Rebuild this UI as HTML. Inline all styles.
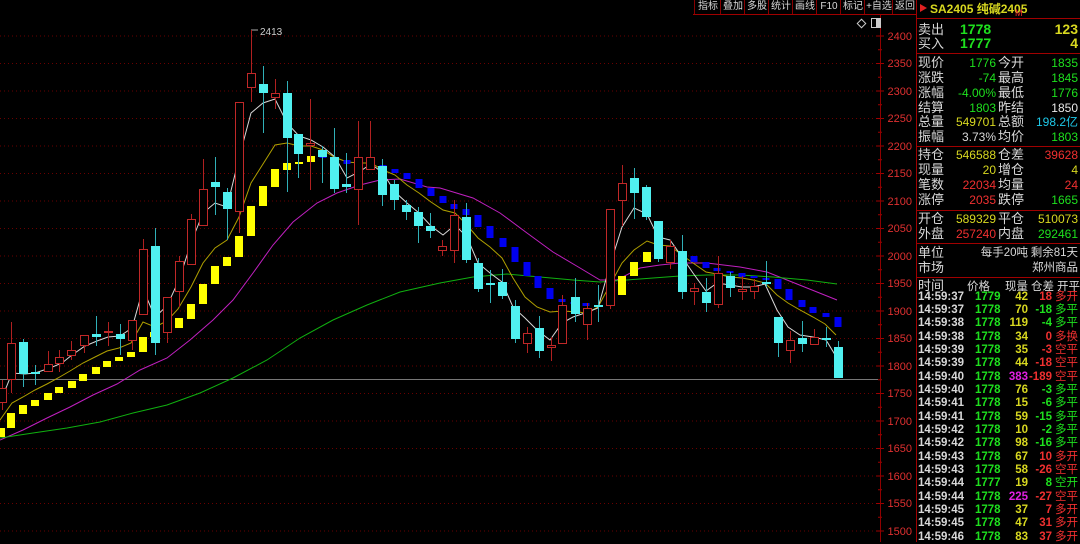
<!DOCTYPE html>
<html><head><meta charset="utf-8">
<style>
body{margin:0;width:1080px;height:542px;background:#000;overflow:hidden;font-family:"Liberation Sans","Noto Sans CJK SC",sans-serif;position:relative}
.t{position:absolute;font-size:12px;line-height:14px;white-space:nowrap}
.l{color:#d8d8d8;font-size:13px}.g{color:#1ee01e}.y{color:#d8d820}.r{color:#f03030}.w{color:#e8e8e8}.c{color:#1ec8e8}.m{color:#e020e0}
.s{font-size:11.5px}
.R{text-align:right}
.hl{position:absolute;left:916px;width:164px;height:1px;background:#a00000}
.btn{position:absolute;top:0;height:14px;font-size:10px;line-height:14px;color:#d8d8d8;text-align:center;border-left:1px solid #800;white-space:nowrap;overflow:hidden}
.ax{position:absolute;font-size:11px;color:#e03030;left:884px;width:28px;text-align:right;line-height:12px}
.tr div{position:absolute;font-size:11.5px;line-height:13px;font-weight:bold;white-space:nowrap}
.tr .l{font-size:11.5px}
</style></head><body>
<svg id="ch" width="1080" height="542" style="position:absolute;left:0;top:0"></svg>

<div style="position:absolute;left:693px;top:14px;width:223px;height:1px;background:#a00000"></div>
<div class="btn" style="left:694px;width:26px">指标</div>
<div class="btn" style="left:720px;width:24px">叠加</div>
<div class="btn" style="left:744px;width:24px">多股</div>
<div class="btn" style="left:768px;width:24px">统计</div>
<div class="btn" style="left:792px;width:24px">画线</div>
<div class="btn" style="left:816px;width:24px">F10</div>
<div class="btn" style="left:840px;width:24px">标记</div>
<div class="btn" style="left:864px;width:28px">+自选</div>
<div class="btn" style="left:892px;width:24px">返回</div>
<div style="position:absolute;left:858px;top:20px;width:5px;height:5px;border:1px solid #ccc;transform:rotate(45deg)"></div>
<div style="position:absolute;left:871px;top:18px;width:8px;height:8px;border:1px solid #ccc;background:linear-gradient(90deg,#000 50%,#ccc 50%)"></div>

<div class="ax" style="top:31px">2400</div><div class="ax" style="top:58px">2350</div>
<div class="ax" style="top:86px">2300</div><div class="ax" style="top:113px">2250</div>
<div class="ax" style="top:141px">2200</div><div class="ax" style="top:168px">2150</div>
<div class="ax" style="top:196px">2100</div><div class="ax" style="top:223px">2050</div>
<div class="ax" style="top:251px">2000</div><div class="ax" style="top:278px">1950</div>
<div class="ax" style="top:306px">1900</div><div class="ax" style="top:333px">1850</div>
<div class="ax" style="top:361px">1800</div><div class="ax" style="top:388px">1750</div>
<div class="ax" style="top:416px">1700</div><div class="ax" style="top:443px">1650</div>
<div class="ax" style="top:471px">1600</div><div class="ax" style="top:498px">1550</div>
<div class="ax" style="top:526px">1500</div>
<div class="t" style="left:260px;top:26px;font-size:10px;color:#ccc">2413</div>

<div style="position:absolute;left:916px;top:0;width:1px;height:542px;background:#a00000"></div>
<div style="position:absolute;left:920px;top:4px;width:0;height:0;border-left:7px solid #e02020;border-top:4px solid transparent;border-bottom:4px solid transparent"></div>
<div class="t y" style="left:930px;top:2px;font-weight:bold">SA2405 纯碱2405</div>
<div class="t r" style="left:1015px;top:6px;font-size:9px">M</div>
<div class="hl" style="top:18px"></div>
<div class="t l" style="left:918px;top:23px">卖出</div>
<div class="t g" style="left:960px;top:22px;width:44px;font-size:14px;font-weight:bold" >1778</div>
<div class="t y R" style="left:1020px;top:22px;width:58px;font-size:14px;font-weight:bold">123</div>
<div class="t l" style="left:918px;top:37px">买入</div>
<div class="t g" style="left:960px;top:36px;font-size:14px;font-weight:bold">1777</div>
<div class="t y R" style="left:1020px;top:36px;width:58px;font-size:14px;font-weight:bold">4</div>
<div class="hl" style="top:53px"></div>

<div class="t l" style="left:918px;top:56px">现价</div><div class="t g R" style="left:940px;top:56px;width:56px">1776</div><div class="t l" style="left:998px;top:56px">今开</div><div class="t g R" style="left:1020px;top:56px;width:58px">1835</div>
<div class="t l" style="left:918px;top:71px">涨跌</div><div class="t g R" style="left:940px;top:71px;width:56px">-74</div><div class="t l" style="left:998px;top:71px">最高</div><div class="t g R" style="left:1020px;top:71px;width:58px">1845</div>
<div class="t l" style="left:918px;top:86px">涨幅</div><div class="t g R" style="left:940px;top:86px;width:56px">-4.00%</div><div class="t l" style="left:998px;top:86px">最低</div><div class="t g R" style="left:1020px;top:86px;width:58px">1776</div>
<div class="t l" style="left:918px;top:101px">结算</div><div class="t g R" style="left:940px;top:101px;width:56px">1803</div><div class="t l" style="left:998px;top:101px">昨结</div><div class="t w R" style="left:1020px;top:101px;width:58px">1850</div>
<div class="t l" style="left:918px;top:115px">总量</div><div class="t y R" style="left:940px;top:115px;width:56px">549701</div><div class="t l" style="left:998px;top:115px">总额</div><div class="t c R" style="left:1020px;top:115px;width:58px">198.2亿</div>
<div class="t l" style="left:918px;top:130px">振幅</div><div class="t R" style="left:940px;top:130px;width:56px;color:#d8d8d8">3.73%</div><div class="t l" style="left:998px;top:130px">均价</div><div class="t g R" style="left:1020px;top:130px;width:58px">1803</div>
<div class="hl" style="top:146px"></div>
<div class="t l" style="left:918px;top:148px">持仓</div><div class="t y R" style="left:940px;top:148px;width:56px">546588</div><div class="t l" style="left:998px;top:148px">仓差</div><div class="t r R" style="left:1020px;top:148px;width:58px">39628</div>
<div class="t l" style="left:918px;top:163px">现量</div><div class="t y R" style="left:940px;top:163px;width:56px">20</div><div class="t l" style="left:998px;top:163px">增仓</div><div class="t y R" style="left:1020px;top:163px;width:58px">4</div>
<div class="t l" style="left:918px;top:178px">笔数</div><div class="t r R" style="left:940px;top:178px;width:56px">22034</div><div class="t l" style="left:998px;top:178px">均量</div><div class="t r R" style="left:1020px;top:178px;width:58px">24</div>
<div class="t l" style="left:918px;top:193px">涨停</div><div class="t r R" style="left:940px;top:193px;width:56px">2035</div><div class="t l" style="left:998px;top:193px">跌停</div><div class="t g R" style="left:1020px;top:193px;width:58px">1665</div>
<div class="hl" style="top:210px"></div>
<div class="t l" style="left:918px;top:212px">开仓</div><div class="t y R" style="left:940px;top:212px;width:56px">589329</div><div class="t l" style="left:998px;top:212px">平仓</div><div class="t y R" style="left:1020px;top:212px;width:58px">510073</div>
<div class="t l" style="left:918px;top:227px">外盘</div><div class="t r R" style="left:940px;top:227px;width:56px">257240</div><div class="t l" style="left:998px;top:227px">内盘</div><div class="t g R" style="left:1020px;top:227px;width:58px">292461</div>
<div class="hl" style="top:243px"></div>
<div class="t l" style="left:918px;top:246px">单位</div><div class="t l s R" style="left:960px;top:246px;width:68px">每手20吨</div><div class="t l s R" style="left:1020px;top:246px;width:58px">剩余81天</div>
<div class="t l" style="left:918px;top:261px">市场</div><div class="t l s R" style="left:1010px;top:261px;width:68px">郑州商品</div>
<div class="hl" style="top:277px"></div>
<div class="t l" style="left:918px;top:279px">时间</div><div class="t l s" style="left:967px;top:280px">价格</div><div class="t l s" style="left:1005px;top:280px">现量</div><div class="t l s" style="left:1031px;top:280px">仓差</div><div class="t l s" style="left:1057px;top:280px">开平</div>

<div class="tr">
<div class="l" style="left:918px;top:291px">14:59:37</div><div class="g" style="left:975px;top:291px">1779</div><div class="y R" style="left:996px;top:291px;width:32px">42</div><div class="r R" style="left:1030px;top:291px;width:22px">18</div><div class="r" style="left:1055px;top:291px;font-weight:normal">多开</div>
<div class="l" style="left:918px;top:304px">14:59:37</div><div class="g" style="left:975px;top:304px">1778</div><div class="y R" style="left:996px;top:304px;width:32px">70</div><div class="g R" style="left:1030px;top:304px;width:22px">-18</div><div class="g" style="left:1055px;top:304px;font-weight:normal">多平</div>
<div class="l" style="left:918px;top:317px">14:59:38</div><div class="g" style="left:975px;top:317px">1778</div><div class="y R" style="left:996px;top:317px;width:32px">119</div><div class="g R" style="left:1030px;top:317px;width:22px">-4</div><div class="g" style="left:1055px;top:317px;font-weight:normal">多平</div>
<div class="l" style="left:918px;top:331px">14:59:38</div><div class="g" style="left:975px;top:331px">1778</div><div class="y R" style="left:996px;top:331px;width:32px">34</div><div class="r R" style="left:1030px;top:331px;width:22px">0</div><div class="r" style="left:1055px;top:331px;font-weight:normal">多换</div>
<div class="l" style="left:918px;top:344px">14:59:39</div><div class="g" style="left:975px;top:344px">1778</div><div class="y R" style="left:996px;top:344px;width:32px">35</div><div class="r R" style="left:1030px;top:344px;width:22px">-3</div><div class="r" style="left:1055px;top:344px;font-weight:normal">空平</div>
<div class="l" style="left:918px;top:357px">14:59:39</div><div class="g" style="left:975px;top:357px">1778</div><div class="y R" style="left:996px;top:357px;width:32px">44</div><div class="r R" style="left:1030px;top:357px;width:22px">-18</div><div class="r" style="left:1055px;top:357px;font-weight:normal">空平</div>
<div class="l" style="left:918px;top:371px">14:59:40</div><div class="g" style="left:975px;top:371px">1778</div><div class="m R" style="left:996px;top:371px;width:32px">383</div><div class="r R" style="left:1026px;top:371px;width:26px">-189</div><div class="r" style="left:1055px;top:371px;font-weight:normal">空平</div>
<div class="l" style="left:918px;top:384px">14:59:40</div><div class="g" style="left:975px;top:384px">1778</div><div class="y R" style="left:996px;top:384px;width:32px">76</div><div class="g R" style="left:1030px;top:384px;width:22px">-3</div><div class="g" style="left:1055px;top:384px;font-weight:normal">多平</div>
<div class="l" style="left:918px;top:397px">14:59:41</div><div class="g" style="left:975px;top:397px">1778</div><div class="y R" style="left:996px;top:397px;width:32px">15</div><div class="g R" style="left:1030px;top:397px;width:22px">-6</div><div class="g" style="left:1055px;top:397px;font-weight:normal">多平</div>
<div class="l" style="left:918px;top:411px">14:59:41</div><div class="g" style="left:975px;top:411px">1778</div><div class="y R" style="left:996px;top:411px;width:32px">59</div><div class="g R" style="left:1030px;top:411px;width:22px">-15</div><div class="g" style="left:1055px;top:411px;font-weight:normal">多平</div>
<div class="l" style="left:918px;top:424px">14:59:42</div><div class="g" style="left:975px;top:424px">1778</div><div class="y R" style="left:996px;top:424px;width:32px">10</div><div class="g R" style="left:1030px;top:424px;width:22px">-2</div><div class="g" style="left:1055px;top:424px;font-weight:normal">多平</div>
<div class="l" style="left:918px;top:437px">14:59:42</div><div class="g" style="left:975px;top:437px">1778</div><div class="y R" style="left:996px;top:437px;width:32px">98</div><div class="g R" style="left:1030px;top:437px;width:22px">-16</div><div class="g" style="left:1055px;top:437px;font-weight:normal">多平</div>
<div class="l" style="left:918px;top:451px">14:59:43</div><div class="g" style="left:975px;top:451px">1778</div><div class="y R" style="left:996px;top:451px;width:32px">67</div><div class="r R" style="left:1030px;top:451px;width:22px">10</div><div class="r" style="left:1055px;top:451px;font-weight:normal">多开</div>
<div class="l" style="left:918px;top:464px">14:59:43</div><div class="g" style="left:975px;top:464px">1778</div><div class="y R" style="left:996px;top:464px;width:32px">58</div><div class="r R" style="left:1030px;top:464px;width:22px">-26</div><div class="r" style="left:1055px;top:464px;font-weight:normal">空平</div>
<div class="l" style="left:918px;top:477px">14:59:44</div><div class="g" style="left:975px;top:477px">1777</div><div class="y R" style="left:996px;top:477px;width:32px">19</div><div class="g R" style="left:1030px;top:477px;width:22px">8</div><div class="g" style="left:1055px;top:477px;font-weight:normal">空开</div>
<div class="l" style="left:918px;top:491px">14:59:44</div><div class="g" style="left:975px;top:491px">1778</div><div class="m R" style="left:996px;top:491px;width:32px">225</div><div class="r R" style="left:1030px;top:491px;width:22px">-27</div><div class="r" style="left:1055px;top:491px;font-weight:normal">空平</div>
<div class="l" style="left:918px;top:504px">14:59:45</div><div class="g" style="left:975px;top:504px">1778</div><div class="y R" style="left:996px;top:504px;width:32px">37</div><div class="r R" style="left:1030px;top:504px;width:22px">7</div><div class="r" style="left:1055px;top:504px;font-weight:normal">多开</div>
<div class="l" style="left:918px;top:517px">14:59:45</div><div class="g" style="left:975px;top:517px">1778</div><div class="y R" style="left:996px;top:517px;width:32px">47</div><div class="r R" style="left:1030px;top:517px;width:22px">31</div><div class="r" style="left:1055px;top:517px;font-weight:normal">多开</div>
<div class="l" style="left:918px;top:531px">14:59:46</div><div class="g" style="left:975px;top:531px">1778</div><div class="y R" style="left:996px;top:531px;width:32px">83</div><div class="r R" style="left:1030px;top:531px;width:22px">37</div><div class="r" style="left:1055px;top:531px;font-weight:normal">多开</div>
</div>

<script>
var s=document.getElementById('ch'),h='';
for(var i=0;i<19;i++){var y=36+i*27.5;h+='<line x1="0" x2="880" y1="'+y+'" y2="'+y+'" stroke="#6a0000" stroke-dasharray="1,3"/>';
h+='<line x1="876" x2="884" y1="'+y+'" y2="'+y+'" stroke="#a00000"/>';h+='<line x1="878" x2="882" y1="'+(y+13.75)+'" y2="'+(y+13.75)+'" stroke="#a00000"/>';}
h+='<line x1="880.5" x2="880.5" y1="15" y2="542" stroke="#900000"/>';
h+='<line x1="0" x2="878" y1="379.5" y2="379.5" stroke="#777"/>';
h+='<line x1="251" y1="30" x2="258" y2="30" stroke="#aaa"/>';
function pl(p,c){h+='<polyline fill="none" stroke="'+c+'" stroke-width="1" points="'+p+'"/>';}
pl("0,440 23,430 47,418 70,407 93,395 117,384 140,370 167,358 190,340 213,320 233,300 253,273 273,245 293,222 317,203 337,193 360,185 380,180 400,179 427,187 440,188 473,198 500,213 527,233 553,252 580,268 600,280 617,280 640,268 660,265 680,263 707,263 740,267 767,272 787,280 807,288 837,300","#c020c0");
pl("0,438 33,433 67,428 100,422 133,413 167,405 200,393 233,378 267,360 300,338 333,320 367,305 400,292 440,283 473,277 507,274 540,277 573,280 600,282 627,280 653,278 680,276 707,275 740,275 773,277 807,280 837,284","#10b010");
pl("0,420 12,403 23,397 35,390 47,384 58,378 70,371 83,363 95,357 107,351 119,348 131,343 143,322 155,327 167,321 178,309 191,287 203,263 215,248 227,240 239,217 251,183 263,164 275,145 287,143 299,146 311,146 323,150 334,157 347,162 359,163 371,163 383,170 395,175 407,185 419,193 431,202 443,210 455,213 467,225 478,238 490,247 502,258 513,278 525,297 537,307 550,312 563,311 577,312 587,313 598,307 610,285 622,263 634,250 647,241 658,245 670,246 682,255 693,263 706,272 717,274 730,277 742,278 753,280 765,283 777,295 788,303 800,310 813,317 825,324 836,335","#b0a000");
pl("0,403 12,373 25,374 35,373 50,368 62,363 72,355 85,346 97,341 108,337 120,336 132,328 143,289 155,317 167,306 179,280 191,243 203,213 215,203 227,207 239,158 251,113 263,103 275,99 287,123 299,136 311,140 323,147 335,157 347,178 359,172 371,164 383,173 395,192 407,203 419,213 431,226 443,235 455,225 467,237 478,263 490,273 502,282 513,307 525,318 537,330 550,340 562,323 573,317 585,313 598,308 610,265 622,227 634,208 647,214 658,237 670,240 682,257 693,273 706,291 717,283 730,285 742,287 753,287 765,284 777,310 788,327 800,335 813,337 826,340 837,358","#d8d8d8");
var Y=[[1,428,437],[11,413,428],[23,405,414],[35,400,406],[48,393,400],[59,387,393],[72,381,388],[83,374,381],[96,367,374],[107,361,367],[119,357,361],[131,352,357],[143,337,352],[154,332,337],[167,328,333],[179,318,328],[191,304,319],[203,284,304],[215,266,284],[227,257,266],[239,236,257],[251,206,236],[263,186,206],[275,169,187],[287,163,170],[299,162,164],[311,156,162],[371,165,167],[610,295,306],[622,276,295],[634,262,276],[647,252,262],[658,250,252]];
var B=[[323,156,158],[334,157,160],[347,160,164],[359,164,168],[383,165,169],[395,169,173],[407,173,179],[419,179,188],[431,188,196],[443,196,203],[454,204,209],[466,209,215],[478,215,227],[490,226,238],[503,238,247],[515,247,262],[527,262,276],[538,276,288],[550,288,299],[562,299,302],[574,302,304],[586,303,306],[598,305,307],[670,250,252],[682,251,256],[694,256,262],[706,262,268],[717,268,271],[730,271,273],[742,273,277],[754,276,278],[766,278,280],[778,279,289],[789,289,300],[802,300,307],[813,307,313],[826,313,317],[838,317,327]];
Y.forEach(function(m){h+='<rect x="'+(m[0]-4)+'" y="'+m[1]+'" width="8" height="'+Math.max(2,m[2]-m[1])+'" fill="#ffff00"/>';});
B.forEach(function(m){h+='<rect x="'+(m[0]-3.5)+'" y="'+m[1]+'" width="7" height="'+Math.max(2,m[2]-m[1])+'" fill="#0000f0"/>';});
var C=[["r",2,388,403,380,410],["r",11,343,380,322,393],["c",23,342,374,339,387],["c",35,372,374,365,385],["r",48,364,372,351,372],["r",59,357,364,350,372],["r",71,350,356,341,360],["r",84,335,346,335,353],["c",96,334,337,316,346],["r",108,331,333,322,346],["c",120,334,339,324,355],["r",132,320,341,320,350],["r",143,249,315,239,315],["c",155,246,343,228,355],["r",167,297,333,297,343],["r",179,261,292,256,307],["r",191,219,265,214,265],["r",203,189,226,159,226],["c",215,182,187,157,215],["c",227,192,209,188,240],["r",239,102,212,102,233],["r",251,73,88,30,102],["c",263,84,93,66,133],["r",275,93,98,79,109],["c",287,93,138,81,192],["c",298,134,154,134,178],["r",310,143,146,99,190],["c",322,150,157,146,183],["c",334,157,189,128,193],["c",346,184,187,153,193],["r",358,157,190,121,225],["r",370,157,170,121,170],["c",382,166,195,159,206],["c",394,184,200,180,210],["c",406,205,212,200,220],["c",418,212,226,207,243],["c",430,226,231,213,238],["r",442,246,251,240,256],["r",454,215,251,200,263],["c",466,217,260,203,263],["c",478,263,289,258,292],["c",490,283,285,270,303],["c",502,282,296,269,299],["c",515,306,339,300,343],["r",527,333,344,327,353],["c",539,328,351,316,358],["r",551,345,348,337,361],["r",562,305,344,295,344],["c",575,297,314,278,322],["r",587,308,325,303,340],["c",598,305,307,285,322],["r",610,209,306,209,309],["r",622,183,201,165,226],["c",634,178,193,168,219],["c",646,187,217,185,220],["c",658,221,259,221,262],["r",670,246,263,240,269],["c",682,251,292,235,299],["r",694,288,292,283,305],["c",706,292,303,278,312],["r",718,273,305,256,308],["c",730,276,288,272,297],["r",742,289,292,276,300],["r",754,286,292,279,299],["c",766,282,284,261,287],["c",778,317,343,317,357],["r",790,340,351,331,363],["c",802,338,344,321,352],["r",814,337,345,329,345],["c",826,338,340,327,347],["c",838,347,378,341,378]];
C.forEach(function(k){var x=k[1],col=k[0]=="r"?"#c02828":"#50f0f0";
h+='<line x1="'+(x+.5)+'" x2="'+(x+.5)+'" y1="'+k[4]+'" y2="'+k[5]+'" stroke="'+(k[0]=="r"?"#b02020":"#30b0b8")+'"/>';
var bh=Math.max(2,k[3]-k[2]);
if(k[0]=="r")h+='<rect x="'+(x-3.5)+'" y="'+(k[2]+.5)+'" width="8" height="'+(bh-1)+'" fill="#000" stroke="'+col+'"/>';
else h+='<rect x="'+(x-4)+'" y="'+k[2]+'" width="9" height="'+bh+'" fill="'+col+'"/>';});
s.innerHTML=h;
</script>
</body></html>
